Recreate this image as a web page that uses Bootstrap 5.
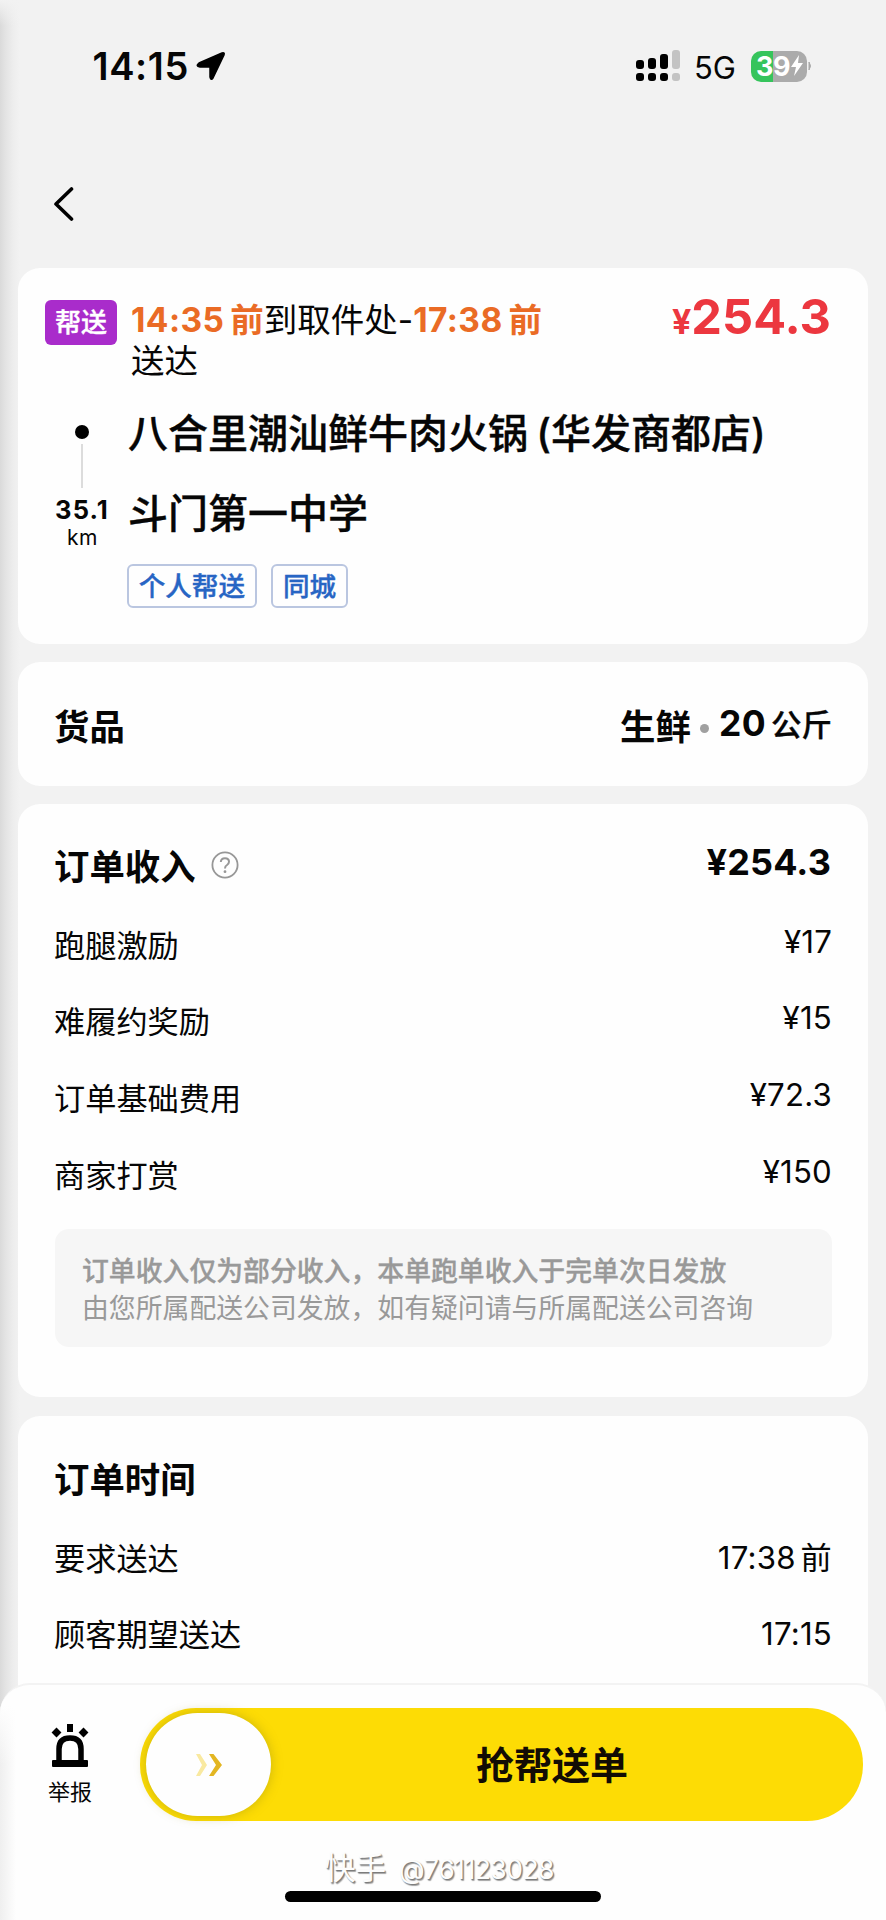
<!DOCTYPE html>
<html lang="zh-CN">
<head>
<meta charset="utf-8">
<meta name="viewport" content="width=device-width, initial-scale=1">
<title>订单详情</title>
<link href="https://cdn.jsdelivr.net/npm/bootstrap@5.3.0/dist/css/bootstrap.min.css" rel="stylesheet">
<style>
  body { margin:0; background:#f2f2f2; color:#060606; font-family:Inter,"Noto Sans CJK SC",sans-serif; }
  .screen { width:886px; height:1920px; overflow:hidden; position:relative; background:#f2f2f2; }
  .edge-shade { position:absolute; left:0; top:0; bottom:0; width:20px; pointer-events:none; z-index:0;
    background:linear-gradient(180deg,#f2f2f2 0,rgba(242,242,242,0) 26px),linear-gradient(90deg,#dadada 0,#e4e4e4 30%,#ededed 65%,#f2f2f2 100%); }
  .cjk { font-family:"Noto Sans CJK SC",sans-serif; }
  .medium { font-weight:500; -webkit-text-stroke:.35px currentColor; }

  /* status bar */
  .statusbar { height:132px; padding:0 74px 0 92.5px; position:relative; }
  .clock { font-size:38px; font-weight:600; line-height:40px; letter-spacing:.6px; width:97px; white-space:nowrap; }
  .net { font-size:31px; line-height:40px; margin:0 15px 0 13px; }
  .battery { width:56px; height:31px; border-radius:10px; background:linear-gradient(90deg,#36c45c 0 22.5px,#ababab 22.5px); color:#fff; font-size:27px; font-weight:700; line-height:31px; padding-left:5px; }
  .battery span { letter-spacing:-.4px; }
  .backrow { height:136px; padding-left:54px; padding-top:55px; position:relative; }

  /* cards */
  .panel { background:#fefefe; border-radius:22px; margin:0 18px 18px 18px; position:relative; }
  .order { height:376px; padding:32px 37px 0 27px; }
  .kind { width:72px; height:45px; border-radius:6px; background:#a92ccb; color:#fff; font-size:26px; line-height:42px; text-align:center; }
  .when { width:430px; margin-left:14px; font-size:33.5px; line-height:41px; white-space:nowrap; }
  .when b { color:#ea6b25; font-weight:700; }
  .when .hm { letter-spacing:.4px; margin-right:-2px; }
  .price { color:#ec373f; font-weight:700; font-size:48.7px; line-height:48px; margin-top:-7px; }
  .price small { font-size:34px; }
  .rail { width:73px; padding-top:43px; }
  .knot { width:14px; height:14px; border-radius:50%; background:#000; }
  .wire { width:2px; height:44px; background:#dcdcdc; margin-top:5px; }
  .dist { font-size:25.5px; font-weight:700; line-height:28px; margin:8px 0 0 1px; letter-spacing:1.1px; }
  .unit { font-size:21px; line-height:26px; letter-spacing:.5px; padding-left:2px; margin-top:1px; }
  .route { padding-top:12px; }
  .stop { font-size:40px; line-height:80px; height:80px; white-space:nowrap; padding-left:10px; word-spacing:-2.5px; }
  .tags { gap:14.5px; margin-left:9px; margin-top:10px; }
  .tagbox { height:44px; border:2px solid #bac6e0; border-radius:6px; color:#2765c4; font-size:26.6px; line-height:37px; padding:0 9.7px; }

  .goods { height:124px; padding:0 36px 0 36px; }
  .head { font-size:35.4px; font-weight:700; line-height:49px; }
  .weight .dot { width:9px; height:9px; border-radius:50%; background:#a0a0a0; margin:8px 10px 0 9px; }
  .qty { font-size:35.5px; font-weight:700; letter-spacing:.4px; }
  .jin { font-size:30.5px; margin-left:5px; }

  .money { padding:22px 34px 0 36px; height:593px; margin-bottom:19px; }
  .times { padding:23px 34px 0 36px; height:320px; }
  .headrow { height:80px; padding-bottom:4px; }
  .help { margin-left:15px; margin-top:2px; }
  .sum { font-size:36px; font-weight:700; padding-bottom:4px; padding-right:3px; letter-spacing:.1px; }
  .line { height:76.6px; font-size:31.2px; }
  .line .amt { padding-right:2px; padding-bottom:4px; letter-spacing:.2px; word-spacing:-4px; }
  .line .amt.clk { padding-bottom:0; padding-top:2px; }
  .note { background:#f6f6f6; border-radius:14px; height:118px; margin-top:16.6px; margin-left:1px; padding:22px 27px; color:#999; font-size:26.85px; line-height:37px; white-space:nowrap; width:777px; }
  .note b { display:block; }

  /* bottom action bar */
  .dock { position:absolute; left:0; right:0; bottom:0; height:237px; background:#fefefe; border-radius:30px 30px 0 0; border-top:2px solid #f3f3f3; z-index:2; overflow:hidden; }
  .dock::before { content:""; position:absolute; left:0; top:0; bottom:0; width:16px; background:linear-gradient(180deg,#fefefe 20px,rgba(254,254,254,0) 80px),linear-gradient(90deg,#efefef,#fefefe); }
  .report { width:44px; margin-left:48px; margin-top:39px; font-size:22px; line-height:30px; white-space:nowrap; position:relative; }
  .rlabel { margin-top:7px; }
  .slide { width:723px; height:113px; margin-left:48px; margin-top:23px; border-radius:56px; background:#fddc05; padding:5px 6px; }
  .thumb { width:125px; height:103px; border-radius:52px; background:#fefefe; box-shadow:0 0 12px rgba(130,120,20,.4); }
  .grab { font-size:38px; font-weight:700; line-height:50px; margin:-4px 0 0 205px; color:#120c04; }
  .wm { font-size:30.5px; line-height:36px; color:#fdfdfd; text-shadow:1px 1px 1px #777,1.5px 2px 1px #aaa; margin-top:29px; height:36px; white-space:nowrap; padding-left:325px; }
  .wm .uid { font-size:26.5px; letter-spacing:-.5px; margin-left:13px; }
  .homebar { width:316px; height:11px; border-radius:6px; background:#000; margin:5px 0 0 285px; }
</style>
</head>
<body>
<div class="screen">
  <div class="edge-shade"></div>

  <header class="statusbar d-flex align-items-center">
    <div class="clock">14:15</div>
    <svg class="ms-1" width="34" height="34" viewBox="0 0 34 34"><path d="M5 14 L28 4 Q31 3 30 6 L19 29 Q17 32 16 28 V18 H6 Q1 17 5 14Z" fill="#000" stroke="#000" stroke-width="1.5" stroke-linejoin="round"/></svg>
    <div class="ms-auto d-flex align-items-center">
      <svg width="46" height="32" viewBox="0 0 46 32">
        <g fill="#000"><rect x="1" y="10" width="8" height="9" rx="3"/><rect x="13" y="8" width="8" height="11" rx="3"/><rect x="25" y="4" width="8" height="15" rx="3"/><rect x="1" y="23" width="8" height="8" rx="3"/><rect x="13" y="23" width="8" height="8" rx="3"/><rect x="25" y="23" width="8" height="8" rx="3"/></g>
        <g fill="#c3c3c3"><rect x="37" y="0" width="8" height="19" rx="3"/><rect x="37" y="23" width="8" height="8" rx="3"/></g>
      </svg>
      <div class="net pt-1">5G</div>
      <div class="battery d-flex align-items-center"><span>39</span>
        <svg width="14" height="22" viewBox="0 0 14 22"><path d="M9 0 L1 12 H6 L4 21 L13 8 H8Z" fill="#fff"/></svg>
      </div>
      <svg width="5" height="10" viewBox="0 0 5 10"><path d="M2 1 Q5 5 2 9Z" fill="#aaa" stroke="#aaa"/></svg>
    </div>
  </header>

  <nav class="backrow">
    <svg class="d-block" width="20" height="34" viewBox="0 0 20 34"><path d="M17.5 2 L2 17 L17.5 32" fill="none" stroke="#000" stroke-width="3.6" stroke-linecap="round" stroke-linejoin="round"/></svg>
  </nav>

  <main>
    <section class="panel order">
      <div class="d-flex align-items-start">
        <div class="kind cjk medium">帮送</div>
        <div class="when"><b><span class="hm">14:35</span> 前</b>到取件处-<b><span class="hm">17:38</span> 前</b><br>送达</div>
        <div class="price ms-auto"><small>¥</small>254.3</div>
      </div>
      <div class="d-flex">
        <div class="rail d-flex flex-column align-items-center">
          <div class="knot"></div><div class="wire"></div>
          <div class="dist">35.1</div><div class="unit">km</div>
        </div>
        <div class="route">
          <div class="stop medium">八合里潮汕鲜牛肉火锅 (华发商都店)</div>
          <div class="stop medium">斗门第一中学</div>
          <div class="tags d-flex">
            <div class="tagbox cjk medium">个人帮送</div>
            <div class="tagbox cjk medium">同城</div>
          </div>
        </div>
      </div>
    </section>

    <section class="panel goods d-flex align-items-center justify-content-between">
      <div class="head cjk">货品</div>
      <div class="weight d-flex align-items-center">
        <span class="head cjk">生鲜</span><i class="dot"></i><span class="qty">20</span><span class="jin cjk medium">公斤</span>
      </div>
    </section>

    <section class="panel money">
      <div class="headrow d-flex align-items-center">
        <div class="head cjk">订单收入</div>
        <svg class="help" width="28" height="28" viewBox="0 0 28 28"><circle cx="14" cy="14" r="12.6" fill="none" stroke="#979797" stroke-width="1.8"/><path d="M9.8 11 Q10 7.2 14 7.2 Q18 7.2 18 10.8 Q18 12.7 16 14 Q14 15.2 14 17.4" fill="none" stroke="#979797" stroke-width="2"/><circle cx="14" cy="20.7" r="1.4" fill="#979797"/></svg>
        <div class="sum ms-auto">¥254.3</div>
      </div>
      <div class="line d-flex align-items-center justify-content-between"><span class="cjk">跑腿激励</span><span class="amt">¥17</span></div>
      <div class="line d-flex align-items-center justify-content-between"><span class="cjk">难履约奖励</span><span class="amt">¥15</span></div>
      <div class="line d-flex align-items-center justify-content-between"><span class="cjk">订单基础费用</span><span class="amt">¥72.3</span></div>
      <div class="line d-flex align-items-center justify-content-between"><span class="cjk">商家打赏</span><span class="amt">¥150</span></div>
      <div class="note cjk"><b class="medium">订单收入仅为部分收入，本单跑单收入于完单次日发放</b>由您所属配送公司发放，如有疑问请与所属配送公司咨询</div>
    </section>

    <section class="panel times">
      <div class="headrow d-flex align-items-center"><div class="head cjk">订单时间</div></div>
      <div class="line d-flex align-items-center justify-content-between"><span class="cjk">要求送达</span><span class="amt clk">17:38 前</span></div>
      <div class="line d-flex align-items-center justify-content-between"><span class="cjk">顾客期望送达</span><span class="amt clk">17:15</span></div>
    </section>
  </main>

  <footer class="dock">
    <div class="d-flex align-items-start">
      <div class="report cjk text-center">
        <svg class="d-block mx-auto" width="38" height="44" viewBox="0 0 38 44"><g fill="#000"><rect x="16" y="0" width="6" height="8"/><rect x="2" y="5" width="7" height="7" transform="rotate(45 5.5 8.5)"/><rect x="29" y="5" width="7" height="7" transform="rotate(45 32.5 8.5)"/><rect x="1" y="36" width="36" height="7" rx="1"/></g><path d="M8 38 V25 Q8 14 19 14 Q30 14 30 25 V38" fill="none" stroke="#000" stroke-width="5.5"/></svg>
        <div class="rlabel">举报</div>
      </div>
      <div class="slide d-flex align-items-center">
        <div class="thumb d-flex align-items-center justify-content-center">
          <svg width="28" height="24" viewBox="0 0 28 24"><path d="M1 1 H5 L12 12 L5 23 H1 L7 12Z" fill="#f9e9a0"/><path d="M14 1 H18.5 L27 12 L18.5 23 H14 L21 12Z" fill="#e3b622"/></svg>
        </div>
        <div class="grab cjk">抢帮送单</div>
      </div>
    </div>
    <div class="wm">快手<span class="uid">@761123028</span></div>
    <div class="homebar"></div>
  </footer>
</div>
<script src="https://cdn.jsdelivr.net/npm/bootstrap@5.3.0/dist/js/bootstrap.bundle.min.js"></script>
</body>
</html>
